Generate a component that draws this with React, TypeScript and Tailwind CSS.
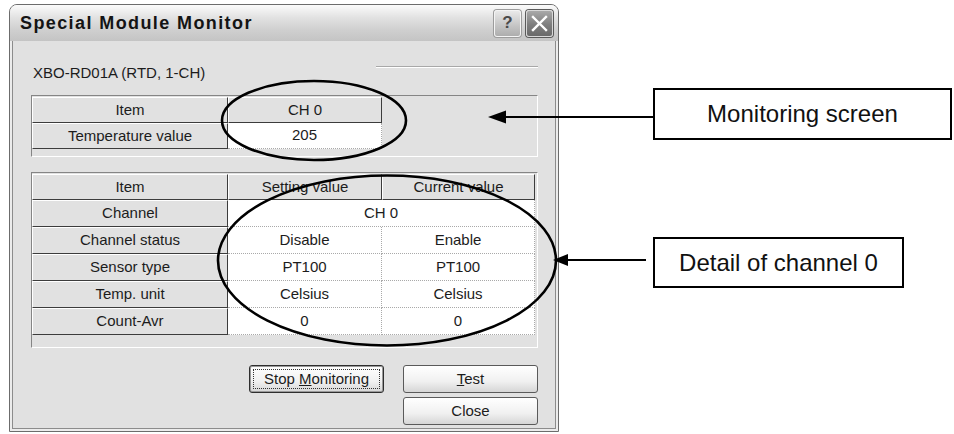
import React from "react";

function HeadCell({ children, className = "" }: { children: React.ReactNode; className?: string }) {
  return (
    <div
      className={`flex items-center justify-center bg-[#e1e1e1] border border-t-white border-l-white border-r-[#3c3c3c] border-b-[#3c3c3c] text-[#1c1c1c] ${className}`}
    >
      {children}
    </div>
  );
}

function DataCell({ children, className = "" }: { children: React.ReactNode; className?: string }) {
  return (
    <div
      className={`flex items-center justify-center bg-white border-r border-b border-dotted border-[#a9a9a9] text-[#1c1c1c] ${className}`}
    >
      {children}
    </div>
  );
}

function WinButton({ children, focused = false }: { children: React.ReactNode; focused?: boolean }) {
  return (
    <div
      className={`relative h-[28px] w-[135px] flex items-center justify-center rounded-[3px] border bg-[linear-gradient(to_bottom,#ffffff,#f0f0f0_60%,#d6d6d6)] text-[#1c1c1c] ${
        focused ? "border-[#2e2e2e] shadow-[inset_0_0_0_1px_#9a9a9a]" : "border-[#5a5a5a]"
      }`}
    >
      {focused && <div className="absolute inset-[3px] border border-dotted border-[#333]" />}
      <span>{children}</span>
    </div>
  );
}

export default function App() {
  const rows = [
    { item: "Channel status", set: "Disable", cur: "Enable" },
    { item: "Sensor type", set: "PT100", cur: "PT100" },
    { item: "Temp. unit", set: "Celsius", cur: "Celsius" },
    { item: "Count-Avr", set: "0", cur: "0" },
  ];

  return (
    <div className="relative w-[954px] h-[434px] bg-white overflow-hidden font-['Liberation_Sans',Arial,sans-serif] text-[15px]">
      {/* dialog window */}
      <div className="ml-[9px] mt-[4px] w-[550px] h-[428px] flex flex-col rounded-t-[8px] border border-[#6c6c6c] bg-[#ececec] overflow-hidden">
        {/* title bar */}
        <div className="h-[36px] shrink-0 flex items-center pl-[10px] pr-[5px] bg-[linear-gradient(to_bottom,#fbfbfb,#e2e2e2_35%,#cfcfcf_70%,#c4c4c4)]">
          <span className="text-[18px] font-bold tracking-[1.4px] text-[#141414]">Special Module Monitor</span>
          <div className="ml-auto flex gap-[5px]">
            <div className="w-[27px] h-[27px] rounded-[3px] border border-[#f4f4f4] bg-[linear-gradient(to_bottom,#e9e9e9,#c4c4c4_60%,#adadad)] shadow-[0_0_0_1px_#9c9c9c] flex items-center justify-center">
              <span className="text-[17px] font-bold text-[#4a4a4a]">?</span>
            </div>
            <div className="w-[27px] h-[27px] rounded-[3px] border border-[#d8d8d8] bg-[linear-gradient(to_bottom,#a9a9a9,#7e7e7e_55%,#6a6a6a)] shadow-[0_0_0_1px_#5a5a5a] flex items-center justify-center">
              <svg width="17" height="17" viewBox="0 0 17 17">
                <path d="M2 2 L15 15 M15 2 L2 15" stroke="#ffffff" strokeWidth="2.4" strokeLinecap="square" />
              </svg>
            </div>
          </div>
        </div>

        {/* client area */}
        <div className="flex-1 mx-[2px] mb-[2px] border-x border-b border-[#8c8c8c] bg-[#e1e1e1] flex flex-col pl-[18px] pr-[17px]">
          <div className="mt-[23px] h-[18px] flex items-start">
            <span className="pl-[2px] leading-[18px] text-[#1c1c1c]">XBO-RD01A (RTD, 1-CH)</span>
            <div className="ml-auto mt-[2px] w-[162px] border-t border-b border-t-[#a8a8a8] border-b-white" />
          </div>

          {/* monitoring panel */}
          <div className="mt-[13px] h-[62px] border border-t-[#858585] border-l-[#858585] border-r-white border-b-white pt-[1px]">
            <div className="grid grid-cols-[196px_154px] auto-rows-[26px]">
              <HeadCell>Item</HeadCell>
              <HeadCell>CH 0</HeadCell>
              <HeadCell>Temperature value</HeadCell>
              <DataCell>205</DataCell>
            </div>
          </div>

          {/* detail panel */}
          <div className="mt-[15px] h-[176px] border border-t-[#858585] border-l-[#858585] border-r-white border-b-white pt-[1px]">
            <div className="grid grid-cols-[196px_154px_153px]">
              <HeadCell className="h-[26px]">Item</HeadCell>
              <HeadCell className="h-[26px]">Setting value</HeadCell>
              <HeadCell className="h-[26px]">Current value</HeadCell>
              <HeadCell className="h-[27px]">Channel</HeadCell>
              <DataCell className="h-[27px] col-span-2">CH 0</DataCell>
              {rows.map((r) => (
                <React.Fragment key={r.item}>
                  <HeadCell className="h-[27px]">{r.item}</HeadCell>
                  <DataCell className="h-[27px]">{r.set}</DataCell>
                  <DataCell className="h-[27px]">{r.cur}</DataCell>
                </React.Fragment>
              ))}
            </div>
          </div>

          {/* buttons */}
          <div className="mt-[17px] grid grid-cols-[135px_135px] gap-x-[19px] gap-y-[4px] justify-end">
            <WinButton focused>
              Stop <span className="underline">M</span>onitoring
            </WinButton>
            <WinButton>
              <span className="underline">T</span>est
            </WinButton>
            <div />
            <WinButton>Close</WinButton>
          </div>
        </div>
      </div>

      {/* callout drawings */}
      <svg className="absolute inset-0 pointer-events-none" width="954" height="434" viewBox="0 0 954 434">
        <ellipse cx="314" cy="120.5" rx="92" ry="39.5" fill="none" stroke="#000" strokeWidth="2.6" />
        <ellipse cx="387" cy="260.5" rx="169" ry="85" fill="none" stroke="#000" strokeWidth="2.6" />
        <line x1="504" y1="117" x2="653" y2="117" stroke="#000" strokeWidth="2.2" />
        <polygon points="488,117 506,110.5 506,123.5" fill="#000" />
        <line x1="566" y1="260" x2="646" y2="260" stroke="#000" strokeWidth="2.2" />
        <polygon points="553,260 568,254 568,266" fill="#000" />
      </svg>

      <div className="absolute left-[653px] top-[88px] w-[299px] h-[52px] border-2 border-black bg-white flex items-center justify-center text-[24px] text-[#111]">
        Monitoring screen
      </div>
      <div className="absolute left-[653px] top-[237px] w-[251px] h-[51px] border-2 border-black bg-white flex items-center justify-center text-[24px] text-[#111]">
        Detail of channel 0
      </div>
    </div>
  );
}
